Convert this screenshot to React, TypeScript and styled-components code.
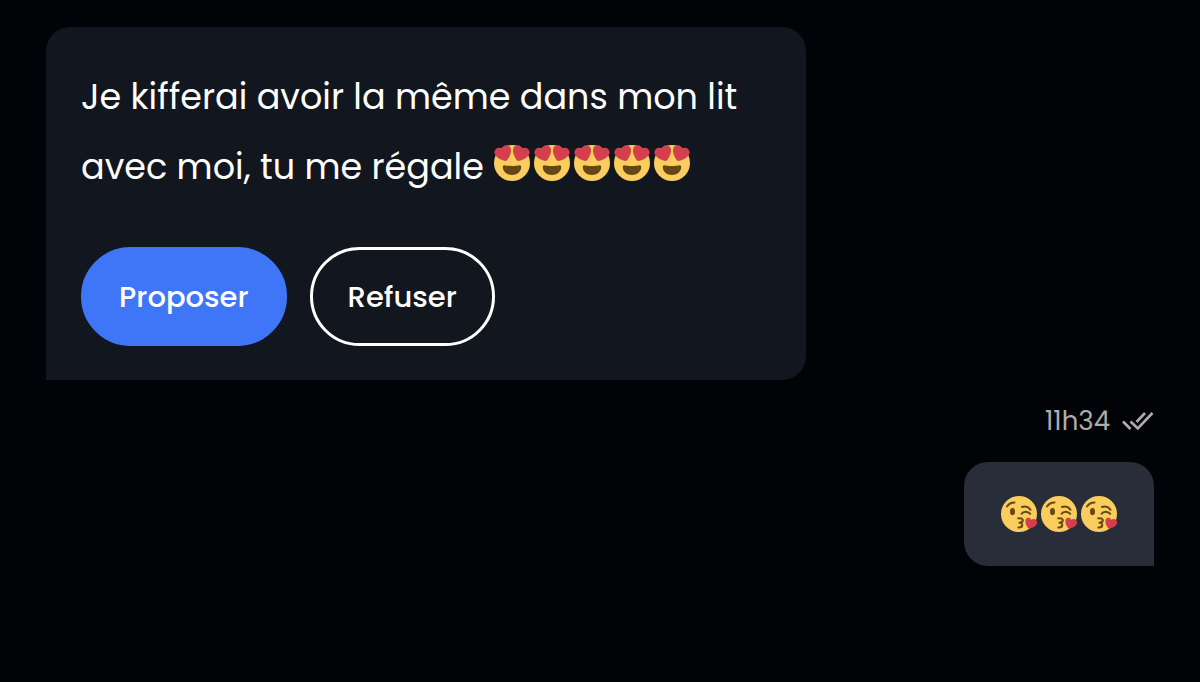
import React from 'react';
import styled, { createGlobalStyle } from 'styled-components';

const GlobalStyle = createGlobalStyle`
  * { box-sizing: border-box; }
  body {
    margin: 0;
    background: #020307;
    color: #fff;
    font-family: Poppins, Inter, 'Noto Sans', sans-serif;
  }
`;

const Conversation = styled.main`
  display: flex;
  flex-direction: column;
  min-height: 100vh;
  padding: 27px 46px;
`;

const ReceivedBubble = styled.article`
  align-self: flex-start;
  max-width: 760px;
  width: 100%;
  padding: 35px 35px 34px;
  border-radius: 24px 24px 24px 0;
  background: #12161e;
`;

const Message = styled.p`
  margin: 0;
  font-size: 35px;
  line-height: 70px;
`;

const Actions = styled.div`
  display: flex;
  gap: 23px;
  margin-top: 45px;
`;

const ActionButton = styled.button<{ $primary?: boolean }>`
  height: 99px;
  padding: 0 35px;
  border: 3px solid ${(p) => (p.$primary ? '#3f76f8' : '#fff')};
  border-radius: 50px;
  background: ${(p) => (p.$primary ? '#3f76f8' : 'transparent')};
  color: #fff;
  font: inherit;
  font-size: 29px;
  font-weight: 500;
  line-height: 44px;
  cursor: pointer;
`;

const Meta = styled.div`
  display: flex;
  align-items: center;
  align-self: flex-end;
  gap: 12px;
  height: 40px;
  margin: 21px 0;
  color: #adadad;
  font-size: 26px;
`;

const SentBubble = styled.article`
  display: flex;
  align-self: flex-end;
  padding: 34px 36px;
  border-radius: 24px 24px 0 24px;
  background: #292d3a;
`;

const Emojis = styled.span`
  display: inline-flex;
  gap: 4px;
  padding: 0 1px;
  vertical-align: -2px;
`;

const EmojiSvg = styled.svg`
  display: block;
  width: 36px;
  height: 36px;
`;

const HeartEyes = () => (
  <EmojiSvg viewBox="0 0 36 36" role="img" aria-label="😍">
    <circle cx="18" cy="18" r="18" fill="#fbcd5c" />
    <path
      fill="#d33f4c"
      d="M16.65 3.281C15.791.85 13.126-.426 10.694.431c-1.476.52-2.521 1.711-2.928 3.104-1.191-.829-2.751-1.1-4.225-.58C1.111 3.813-.167 6.48.692 8.911c.122.344.284.663.472.958 1.951 3.582 7.588 6.1 11.001 6.131 2.637-2.167 5.446-7.665 4.718-11.677-.038-.348-.113-.698-.233-1.042zm2.7 0C20.209.85 22.875-.426 25.306.431c1.476.52 2.521 1.711 2.929 3.104 1.191-.829 2.751-1.1 4.225-.58 2.43.858 3.707 3.525 2.85 5.956-.123.344-.284.663-.473.958-1.951 3.582-7.588 6.1-11.002 6.131-2.637-2.167-5.445-7.665-4.717-11.677.037-.348.112-.698.232-1.042z"
    />
    <path fill="#664713" d="M18 21c-3.6 0-5.5-.3-8-.7-.7 0-1.200.7-1.200 1.700 0 4.500 4 8 9.200 8s9.200-3.500 9.200-8c0-1-.5-1.700-1.200-1.700-2.500.4-4.400.7-8 .7z" />
  </EmojiSvg>
);

const BlowingKiss = () => (
  <EmojiSvg viewBox="0 0 36 36" role="img" aria-label="😘">
    <circle cx="18" cy="18" r="18" fill="#fbcd5c" />
    <ellipse cx="11.5" cy="15.500" rx="2.500" ry="3.600" fill="#664713" />
    <g fill="none" stroke="#664713" strokeWidth="2" strokeLinecap="round" strokeLinejoin="round">
      <path d="M6 10.500c1.800-2.700 4.200-4 7.500-4" />
      <path d="M21 11c3.200-1 6.200-.2 8.400 2.600" />
      <path d="M20.500 17.800c2-2.900 6.300-2.900 8.800 0" />
      <path d="M17.300 22.300c3-.3 4.700.7 4.500 2.200-.2 1.400-1.700 2.100-3.300 2.300 1.900.1 3 .9 2.800 2.300-.2 1.500-2 2.500-4 2.300" />
    </g>
    <path fill="#d33f4c" d="M35.900 25.400c-.6-2.400-3.700-3.300-5.500-1.500-.9-2.500-4.400-3.100-5.600-.7-1.200 2.700.3 7 2.900 9.500 3.500-.6 7.300-2.400 8.200-5.200.2-.7.2-1.400 0-2.100z" />
  </EmojiSvg>
);

const CheckSvg = styled.svg`
  display: block;
  width: 32px;
  height: 20px;
`;

const DoubleCheck = () => (
  <CheckSvg viewBox="0 0 32 20" role="img" aria-label="Lu" fill="none" stroke="currentColor" strokeWidth="2.6">
    <path d="M1 10.500l7.500 7.500" />
    <path d="M8.500 10.500l7.300 7L30.500 2" />
    <path d="M14.500 11L23 2" />
  </CheckSvg>
);

export default function App() {
  return (
    <>
      <GlobalStyle />
      <Conversation>
        <ReceivedBubble>
          <Message>
            Je kifferai avoir la même dans mon lit avec moi, tu me régale{' '}
            <Emojis>
              {[0, 1, 2, 3, 4].map((i) => (
                <HeartEyes key={i} />
              ))}
            </Emojis>
          </Message>
          <Actions>
            <ActionButton type="button" $primary>Proposer</ActionButton>
            <ActionButton type="button">Refuser</ActionButton>
          </Actions>
        </ReceivedBubble>
        <Meta>
          <time dateTime="11:34">11h34</time>
          <DoubleCheck />
        </Meta>
        <SentBubble>
          <Emojis>
            {[0, 1, 2].map((i) => (
              <BlowingKiss key={i} />
            ))}
          </Emojis>
        </SentBubble>
      </Conversation>
    </>
  );
}
